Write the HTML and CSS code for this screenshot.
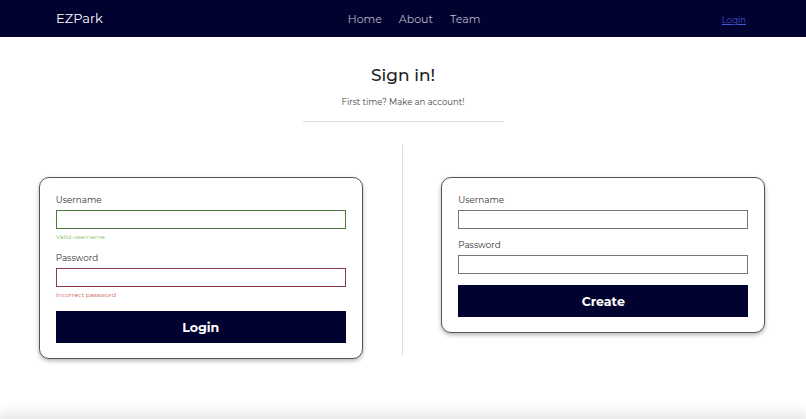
FILE: index.html
```html
<!DOCTYPE html>
<html lang="en">
<head>
<meta charset="utf-8">
<link rel="stylesheet" href="styles.css">
<title>EZPark - Sign in</title>
</head>
<body>
  <nav class="navbar">
    <a class="brand" href="#">EZPark</a>
    <ul class="nav-links">
      <li><a href="#">Home</a></li>
      <li><a href="#">About</a></li>
      <li><a href="#">Team</a></li>
    </ul>
    <div class="nav-right"><a class="nav-login" href="#">Login</a></div>
  </nav>

  <main class="content">
    <div class="intro">
      <h1>Sign in!</h1>
      <p>First time? Make an account!</p>
      <hr>
    </div>

    <div class="forms">
      <div class="col">
        <form class="card">
          <div class="field">
            <label>Username</label>
            <input type="text" class="valid">
            <div class="hint ok">Valid username</div>
          </div>
          <div class="field">
            <label>Password</label>
            <input type="password" class="invalid">
            <div class="hint bad">Incorrect password</div>
          </div>
          <button type="button" class="btn">Login</button>
        </form>
      </div>
      <div class="divider"></div>
      <div class="col">
        <form class="card">
          <div class="field">
            <label>Username</label>
            <input type="text">
          </div>
          <div class="field">
            <label>Password</label>
            <input type="password">
          </div>
          <button type="button" class="btn">Create</button>
        </form>
      </div>
    </div>
  </main>

  <footer class="footer"></footer>
</body>
</html>
```

FILE: styles.css
```css
*{margin:0;padding:0;box-sizing:border-box;}
body{font-family:"Montserrat","Inter",sans-serif;color:#222;background:#fff;}
ul{list-style:none;}

/* top bar */
.navbar{height:37px;background:#020230;display:flex;align-items:center;padding:0 60px 2px 56px;}
.brand{flex:1;color:#fff;text-decoration:none;font-size:13px;}
.nav-links{display:flex;gap:17px;margin-left:26px;}
.nav-links a{color:#b8b8c6;text-decoration:none;font-size:11px;}
.nav-right{flex:1;text-align:right;}
.nav-login{color:#3a57d8;font-size:8.5px;text-decoration:underline;}

.content{min-height:382px;}

/* heading */
.intro{text-align:center;padding-top:27px;}
.intro h1{font-size:17px;font-weight:500;color:#222;line-height:22px;}
.intro p{font-size:8.5px;color:#444;margin-top:10px;line-height:12px;}
.intro hr{width:201px;margin:13px auto 0;border:none;border-top:1px solid #ddd;}

/* two forms */
.forms{display:grid;grid-template-columns:1fr 1px 1fr;margin-top:23px;padding-right:2px;}
.col{display:flex;justify-content:center;align-items:flex-start;padding-top:32px;}
.divider{background:#ddd;height:210px;}

.card{width:324px;border:1px solid #555;border-radius:10px;padding:16px 16px 15px;box-shadow:0 2px 4px rgba(0,0,0,0.3);background:#fff;}
.field{margin-bottom:10px;}
.field label{display:block;font-size:8.8px;line-height:12px;color:#333;margin-bottom:4px;}
.field input{display:block;width:100%;height:19px;border:1px solid #777;outline:none;font-family:inherit;}
.field input.valid{border-color:#4e7a3a;}
.field input.invalid{border-color:#8a3a44;}
.hint{font-size:6.3px;line-height:10px;margin-top:3px;}
.hint.ok{color:#7cc25a;}
.hint.bad{color:#d0524e;}

.btn{display:block;width:100%;height:32px;margin-top:11px;background:#020230;color:#fff;border:none;font-family:inherit;font-weight:700;font-size:12.6px;cursor:pointer;}

.footer{height:40px;background:#020230;box-shadow:0 0 16px 4px rgba(0,0,0,0.12);}
```
